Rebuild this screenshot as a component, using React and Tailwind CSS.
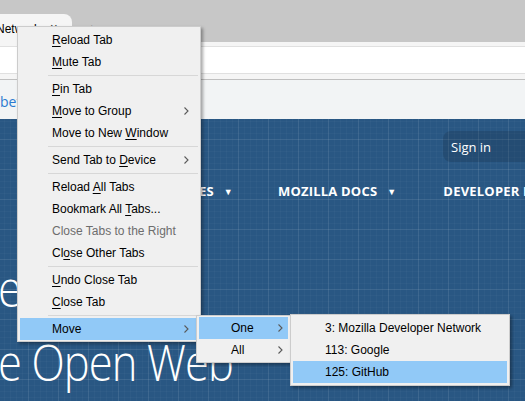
import React from 'react';

const menuFont = { fontFamily: '"Liberation Sans", Arial, sans-serif' };

// "&" marks the access key, as in the Windows menu labels
const Label = ({ text }) => {
  const i = text.indexOf('&');
  if (i < 0) return <span className="whitespace-nowrap">{text}</span>;
  return (
    <span className="whitespace-nowrap">
      {text.slice(0, i)}
      <span className="underline decoration-1 underline-offset-[2px]">{text[i + 1]}</span>
      {text.slice(i + 2)}
    </span>
  );
};

const Chevron = ({ className }) => (
  <svg width="5" height="8" viewBox="0 0 5 8" className={className}>
    <path d="M0.5 0.5 L4 4 L0.5 7.5" fill="none" stroke="#5a5a5a" strokeWidth="1.1" />
  </svg>
);

const Item = ({ text, disabled, arrow, active, arrowGap = 'mr-[9px]' }) => (
  <div
    className={`mx-[2px] h-[22px] flex items-center pl-[32px] text-[12px] ${
      active ? 'bg-[#91c9f7]' : ''
    } ${disabled ? 'text-[#6d6d6d]' : 'text-black'}`}
  >
    <Label text={text} />
    {arrow && <Chevron className={`ml-auto shrink-0 ${arrowGap}`} />}
  </div>
);

const Sep = () => <div className="h-px bg-[#d7d7d7] ml-[30px] mr-[2px] my-[2px]" />;

export default function App() {
  return (
    <div className="relative w-[525px] h-[402px] overflow-hidden bg-white" style={menuFont}>
      {/* tab strip */}
      <div className="h-[42px] bg-[#c7c7c7] flex items-end relative">
        <div className="w-[72px] h-[28px] bg-[#f5f5f5] rounded-tr-[8px] flex items-center text-[12px] text-black overflow-hidden">
          <span className="-ml-[4px] pt-[1px] whitespace-nowrap">Network</span>
          <span className="ml-[10px] text-[13px] text-[#333]">×</span>
        </div>
        <span className="absolute left-[87px] top-[18px] text-[16px] text-[#333]">+</span>
      </div>

      {/* toolbar with url field */}
      <div className="h-[38px] bg-[#f5f5f5] border-b border-[#bfbfbf] pt-[4px]">
        <div className="h-[28px] bg-white border-y border-[#e0e0e0]" />
      </div>

      {/* bookmarks strip */}
      <div className="h-[39px] bg-[#f2f4f5] flex items-center">
        <span className="text-[14px] text-[#2a7ad0] pt-[3px]" style={{ fontFamily: '"Open Sans", sans-serif' }}>
          bet
        </span>
      </div>

      {/* page */}
      <div
        className="h-[282px] bg-[#295783] bg-[linear-gradient(rgba(255,255,255,0.07)_1px,transparent_1px),linear-gradient(90deg,rgba(255,255,255,0.07)_1px,transparent_1px),linear-gradient(rgba(255,255,255,0.025)_1px,transparent_1px),linear-gradient(90deg,rgba(255,255,255,0.025)_1px,transparent_1px)] bg-[size:30px_30px,30px_30px,6px_6px,6px_6px] bg-[position:28px_20px] text-white flex flex-col overflow-hidden"
        style={{ fontFamily: '"Open Sans", sans-serif' }}
      >
        <div className="flex justify-end pt-[12px]">
          <div className="w-[90px] h-[31px] -mr-[8px] rounded-[8px] bg-[rgba(0,0,0,0.12)] flex items-center pl-[8px] pt-[2px] text-[13px]">
            Sign in
          </div>
        </div>
        <div className="flex items-center h-[30px] text-[13px] font-bold mt-[15px] tracking-[0.2px] whitespace-nowrap">
          <span className="ml-[199px] shrink-0">ES</span>
          <span className="ml-[10px] text-[9px] shrink-0">▼</span>
          <span className="ml-[45px] shrink-0">MOZILLA DOCS</span>
          <span className="ml-[10px] text-[9px] shrink-0">▼</span>
          <span className="ml-[47px] shrink-0">DEVELOPER PROGRAM</span>
        </div>
        <div className="font-light text-[50px] leading-[74px] -ml-[2px] mt-[44px] whitespace-nowrap tracking-[-1px] scale-x-[0.87] origin-left">
          ec
        </div>
        <div className="font-light text-[50px] leading-[74px] -ml-[2px] whitespace-nowrap tracking-[-1px] scale-x-[0.87] origin-left">
          e Open Web
        </div>
      </div>

      {/* tab context menu */}
      <div className="absolute left-[17px] top-[26px] w-[184px] bg-[#f0f0f0] border border-[#cccccc] pt-[2px] pb-[1px] shadow-[2px_2px_3px_rgba(0,0,0,0.35)]">
        <Item text="&Reload Tab" />
        <Item text="&Mute Tab" />
        <Sep />
        <Item text="&Pin Tab" />
        <Item text="&Move to Group" arrow />
        <Item text="Move to New &Window" />
        <Sep />
        <Item text="Send Tab to &Device" arrow />
        <Sep />
        <Item text="Reload &All Tabs" />
        <Item text="Bookmark All &Tabs..." />
        <Item text="Close Tabs to the Right" disabled />
        <Item text="Cl&ose Other Tabs" />
        <Sep />
        <Item text="&Undo Close Tab" />
        <Item text="&Close Tab" />
        <Sep />
        <Item text="Move" arrow active />
      </div>

      {/* first submenu */}
      <div className="absolute left-[196px] top-[315px] w-[95px] bg-[#f0f0f0] border border-[#cccccc] py-[1px] shadow-[2px_2px_3px_rgba(0,0,0,0.35)]">
        <Item text="One" arrow active arrowGap="mr-[5px]" />
        <Item text="All" arrow arrowGap="mr-[5px]" />
      </div>

      {/* second submenu */}
      <div className="absolute left-[290px] top-[314px] w-[220px] bg-[#f0f0f0] border border-[#cccccc] py-[2px] shadow-[2px_2px_3px_rgba(0,0,0,0.35)]">
        <Item text="3: Mozilla Developer Network" />
        <Item text="113: Google" />
        <Item text="125: GitHub" active />
      </div>
    </div>
  );
}
